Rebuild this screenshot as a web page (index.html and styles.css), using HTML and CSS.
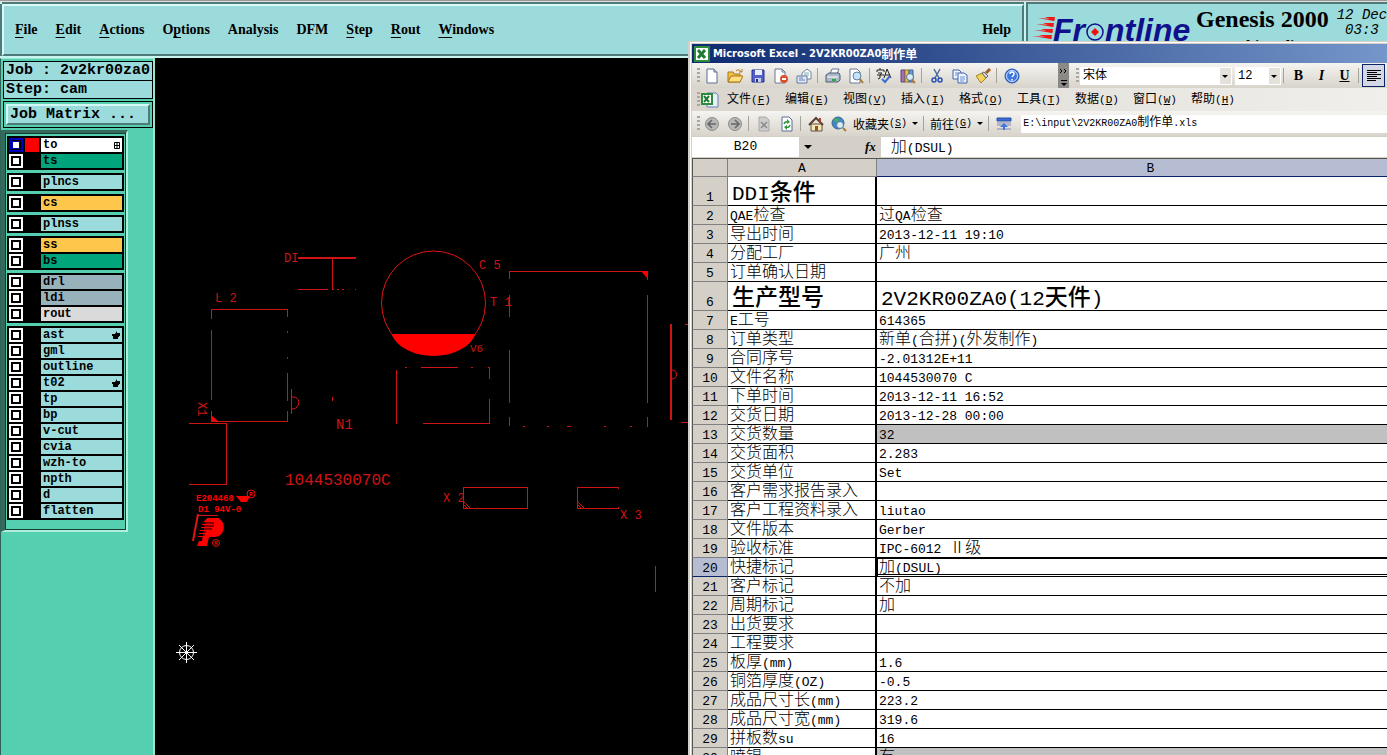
FILE: index.html
```html
<!DOCTYPE html>
<html lang="zh-CN">
<head>
<meta charset="utf-8">
<title>Genesis 2000</title>
<link rel="stylesheet" href="styles.css">
</head>
<body>
<div class="desktop">
  <header class="topbar">
    <nav class="menubar">
      <button><u>F</u>ile</button><button><u>E</u>dit</button><button><u>A</u>ctions</button><button>O<u>p</u>tions</button><button>Analysis</button><button>DFM</button><button><u>S</u>tep</button><button><u>R</u>out</button><button><u>W</u>indows</button><button class="help">Help</button>
    </nav>
    <div class="brand">
      <svg class="logo" width="162" height="38" viewBox="1032 12 162 38">
        <g fill="#f01818"><path d="M1038 18l17 1-1 2zM1036 24l18 1-1 2zM1034 30l19 1-1 2zM1032 36l20 1-1 2z"/><path d="M1045 17h10l-1 4zM1043 23h11l-1 4zM1041 29h12l-1 4zM1039 35h13l-1 4z"/></g>
        <g class="logo-text"><text x="1053" y="41">Fr</text><text x="1105" y="41">ntline</text></g>
        <circle cx="1095" cy="32" r="8" fill="none" stroke="#10108c" stroke-width="1.5"/>
        <path d="M1095 28l4 4-4 4-4-4z" fill="#f01010"/>
      </svg>
      <div class="product"><strong>Genesis 2000</strong><span>Graphic Editor</span></div>
      <div class="clock">12 Dec<br>&nbsp;03:3</div>
    </div>
  </header>
  <div class="work">
    <aside class="side">
      <div class="jobinfo"><div>Job : 2v2kr00za0</div><div>Step: cam</div></div>
      <div class="matrix"><button>Job Matrix ...</button></div>
      <div class="well"><div class="layers">
        <div class="group">
          <label class="layer on"><input type="checkbox" checked><i class="red"></i><span class="white">to<svg width="6" height="7" viewBox="0 0 6 7"><path d="M.5.5h5v6h-5zM0 3.500h6M3 0v7" fill="none" stroke="#000"/></svg></span></label>
          <label class="layer"><input type="checkbox"><i></i><span class="green">ts</span></label>
        </div>
        <div class="group"><label class="layer"><input type="checkbox"><i></i><span>plncs</span></label></div>
        <div class="group"><label class="layer"><input type="checkbox"><i></i><span class="amber">cs</span></label></div>
        <div class="group"><label class="layer"><input type="checkbox"><i></i><span>plnss</span></label></div>
        <div class="group">
          <label class="layer"><input type="checkbox"><i></i><span class="amber">ss</span></label>
          <label class="layer"><input type="checkbox"><i></i><span class="green">bs</span></label>
        </div>
        <div class="group">
          <label class="layer"><input type="checkbox"><i></i><span class="steel">drl</span></label>
          <label class="layer"><input type="checkbox"><i></i><span class="steel">ldi</span></label>
          <label class="layer"><input type="checkbox"><i></i><span class="pale">rout</span></label>
        </div>
        <div class="group">
          <label class="layer"><input type="checkbox"><i></i><span>ast<svg width="8" height="8"><path d="M0 3h3L5 0v2h3v3H7v1H6v2H1V5H0z"/></svg></span></label>
          <label class="layer"><input type="checkbox"><i></i><span>gml</span></label>
          <label class="layer"><input type="checkbox"><i></i><span>outline</span></label>
          <label class="layer"><input type="checkbox"><i></i><span>t02<svg width="8" height="8"><path d="M0 3h3L5 0v2h3v3H7v1H6v2H1V5H0z"/></svg></span></label>
          <label class="layer"><input type="checkbox"><i></i><span>tp</span></label>
          <label class="layer"><input type="checkbox"><i></i><span>bp</span></label>
          <label class="layer"><input type="checkbox"><i></i><span>v-cut</span></label>
          <label class="layer"><input type="checkbox"><i></i><span>cvia</span></label>
          <label class="layer"><input type="checkbox"><i></i><span>wzh-to</span></label>
          <label class="layer"><input type="checkbox"><i></i><span>npth</span></label>
          <label class="layer"><input type="checkbox"><i></i><span>d</span></label>
          <label class="layer"><input type="checkbox"><i></i><span>flatten</span></label>
        </div>
      </div></div>
    </aside>
    <main class="board">
      <svg width="533" height="697" viewBox="155 58 533 697">
        <g fill="none" stroke="#d01414" shape-rendering="crispEdges">
          <path d="M211.500 319v-9.500h76v7M211.500 330v70M211.500 411v10.500h76V411M287.500 331v2M287.500 357v2M287.500 373v28M291.500 389v25M189 423.500h37.500v61H189"/>
          <path d="M298 258h58" stroke-width="2"/>
          <path d="M332.500 259v30M298 289.500h30M332 289.500h2M337 289.500h2M342 289.500h2M355 289.500h1M332.500 397v4"/>
          <path d="M396.500 370v54M405 367.500h2M421 367.500h37M471 367.500h2M488 367.500h2M489.500 368v11M489.500 399v24.500H423"/>
          <path d="M509.500 279v-7.500h138v8M509.500 295v22M509.500 350v53M509.500 417v9M647.500 295v108M647.500 417v10M523 426.500h2M547 426.500h2M567 426.500h4M604 426.500h2M630 426.500h2"/>
          <path d="M671 324v96" stroke-width="2"/>
          <path d="M685 324.500h3M681 422.500h7M655.500 566v26M463.500 487.500h64v21h-64zM618 489v-1.500h-40.500v21H618v-2M463 501l8 8M463 504l5 5M577 501l8 8M577 504l4 4"/>
          <path d="M197 515.500h21"/>
        </g>
        <g fill="none" stroke="#e01414">
          <circle cx="433.500" cy="303" r="52"/>
          <path d="M292 397c9-1 9 12 0 12M672 370c6 0 6 9 0 9"/>
          <circle cx="251" cy="494" r="4"/><circle cx="216" cy="543" r="3.500"/>
          <path d="M198 514l-5 27" stroke-width="2"/>
        </g>
        <g fill="#f00">
          <path d="M391.500 334h84C464 363 403 363 391.500 334z"/>
          <path d="M641 271h7v8zM211 415l7 6h-7z"/>
          <path d="M236 496h14l-3 6h-6z"/>
          <path d="M208 518h7c12 0 12 19-1 19h-5l-2 9h-10l2-5h3l3-21z"/>
          <path d="M207 518h12v1h-12zM204 521h10v1h-10zM202 524h10v1h-10zM201 527h10v1h-10zM200 530h8v1h-8zM199 533h8v1h-8zM198 536h8v1h-8z"/>
        </g>
        <path d="M202 523h12M201 526h13M200 529h12M200 532h6M199 535h6" stroke="#000" fill="none"/>
        <g class="silk">
          <text x="284" y="262">DI</text><text x="215" y="302">L 2</text><text x="479" y="269">C 5</text><text x="490" y="306">T 1</text>
          <text x="470" y="352" class="small">V6</text><text x="336" y="429" class="wide">N1</text><text x="443" y="502">X 2</text><text x="620" y="519">X 3</text>
          <text transform="translate(198 402) rotate(90)">X1</text>
          <text x="285" y="485" class="number">1044530070C</text>
        </g>
        <g class="mark"><text x="196" y="501">E204460</text><text x="198" y="512">D1 94V-0</text><text x="214" y="545" class="reg">R</text><text x="249" y="496" class="reg">R</text></g>
        <g stroke="#fff" fill="none"><circle cx="186.500" cy="652.500" r="7"/><path d="M176 652.500h21M186.500 642v21M179 645l15 15M194 645l-15 15"/></g>
      </svg>
    </main>
  </div>

  <section class="excel">
    <div class="title"><svg width="16" height="16"><path d="M1 1h14v14H1z" fill="#fff" stroke="#2e8b3d" stroke-width="2"/><path d="M4 4l7 8M11 4l-7 8" stroke="#1f7a34" stroke-width="3"/></svg>Microsoft Excel - 2V2KR00ZA0<span>制作单</span></div>
    <div class="tools">
      <b class="grip"></b>
      <button aria-label="New"><svg width="16" height="16"><path d="M3 1h7l3 3v11H3z" fill="#fff" stroke="#5b6c94"/><path d="M10 1v3h3" fill="#c6d3ec" stroke="#5b6c94"/></svg></button>
      <button aria-label="Open"><svg width="16" height="16"><path d="M1 4h5l1 2h6v8H1z" fill="#f3c04a" stroke="#a87416"/><path d="M4 8h12l-3 6H1z" fill="#ffdf80" stroke="#a87416"/><path d="M9 3q3-3 5 1M15 1v3h-3" stroke="#b87820" fill="none"/></svg></button>
      <button aria-label="Save"><svg width="16" height="16"><path d="M2 2h12v12H2z" fill="#5560c8" stroke="#28308c"/><path d="M5 2h7v5H5z" fill="#e8ecfa"/><path d="M5 10h6v4H5z" fill="#c8cff0"/><path d="M6 11h2v3H6z" fill="#28308c"/></svg></button>
      <button aria-label="Permission"><svg width="16" height="16"><path d="M2 1h7l3 3v11H2z" fill="#fff" stroke="#6a7694"/><path d="M9 1v3h3" fill="none" stroke="#6a7694"/><circle cx="11" cy="11" r="4" fill="#d9502c"/><path d="M9 11h4" stroke="#fff" stroke-width="2"/></svg></button>
      <button aria-label="Mail"><svg width="16" height="16"><path d="M6 5l5-4 4 3v7H6z" fill="#fff" stroke="#7282a4"/><path d="M8 5h5M8 7h5" stroke="#8aa"/><path d="M1 8h10v7H1z" fill="#e4ebf8" stroke="#6078a8"/><path d="M3 10h4M3 12h6" stroke="#6078a8"/></svg></button>
      <b class="sep"></b>
      <button aria-label="Print"><svg width="16" height="16"><path d="M5 6l2-5h7l-2 5z" fill="#fff" stroke="#667799"/><path d="M1 7l3-2h10l1 2v5l-2 2H1z" fill="#aab8c8" stroke="#4c5c74"/><path d="M2 9h11" stroke="#fff"/><path d="M7 11h4v2H7z" fill="#28a838"/></svg></button>
      <button aria-label="Preview"><svg width="16" height="16"><path d="M2 1h7l3 3v11H2z" fill="#fff" stroke="#6a7694"/><circle cx="9" cy="8" r="4" fill="#c5e2f6" stroke="#5a80a8"/><path d="M12 11l3 4" stroke="#b07830" stroke-width="2"/></svg></button>
      <b class="sep"></b>
      <button aria-label="Spelling"><svg width="18" height="16"><path d="M4 0v2M1 4V2h7v2M2 5h4L4 7v3l-2 1M1 7h7M8 10l3-9 4 9M9 7h5" fill="none" stroke="#222"/><path d="M6 11l3 3 5-6" fill="none" stroke="#3b6fd4" stroke-width="2"/></svg></button>
      <button aria-label="Research"><svg width="16" height="16"><path d="M1 2h4v12H1z" fill="#a86cb4" stroke="#654080"/><path d="M5 2h4v12H5z" fill="#e8c850" stroke="#8c7420"/><path d="M9 2h4v12H9z" fill="#6c9cd8" stroke="#3c609c"/><circle cx="10" cy="9" r="3.500" fill="#d8ecf8" stroke="#507098"/><path d="M12 12l3 3" stroke="#b07830" stroke-width="2"/></svg></button>
      <b class="sep"></b>
      <button aria-label="Cut"><svg width="16" height="16"><path d="M5 1l5 9M11 1l-5 9" stroke="#4c6a9c" stroke-width="1.500"/><circle cx="5" cy="12" r="2" fill="none" stroke="#2850b4" stroke-width="1.500"/><circle cx="11" cy="12" r="2" fill="none" stroke="#2850b4" stroke-width="1.500"/></svg></button>
      <button aria-label="Copy"><svg width="16" height="16"><path d="M1 2h6l2 2v7H1z" fill="#eef4ff" stroke="#3c64ac"/><path d="M6 5h6l3 2v8H6z" fill="#eef4ff" stroke="#3c64ac"/><path d="M3 5h3M3 7h2M8 9h5M8 11h5M8 13h4" stroke="#6c94d0"/></svg></button>
      <button aria-label="Format painter"><svg width="16" height="16"><path d="M1 8l6-3 4 5-5 5z" fill="#f2d45c" stroke="#a88424"/><path d="M7 5l2-1 4 4-2 2z" fill="#d8dce4" stroke="#666"/><path d="M11 5l4-4" stroke="#a45c24" stroke-width="3"/></svg></button>
      <b class="sep"></b>
      <button aria-label="Help"><svg width="16" height="16"><circle cx="8" cy="8" r="7" fill="#3f78dc" stroke="#2858b0"/><circle cx="8" cy="8" r="5.500" fill="none" stroke="#cfe0ff"/><path d="M6 6q0-2 2-2t2 2q0 1-2 3M8 11v1.500" fill="none" stroke="#fff" stroke-width="1.500"/></svg></button>
      <button class="more" aria-label="More buttons"><svg width="10" height="24"><path d="M1 5l2 2-2 2M5 5l2 2-2 2" fill="none" stroke="#000"/><path d="M2 16h6v1H2zM2 19h6l-3 3z"/></svg></button>
      <b class="grip"></b>
      <span class="combo font"><select aria-label="Font"><option>宋体</option></select></span>
      <span class="combo size"><select aria-label="Font size"><option>12</option></select></span>
      <b class="sep"></b>
      <button class="fmt"><b>B</b></button><button class="fmt"><em>I</em></button><button class="fmt"><u>U</u></button>
      <b class="sep"></b>
      <button class="align" aria-label="Align left"><svg width="16" height="14"><path d="M1 1.500h14M1 3.500h10M1 5.500h14M1 7.500h10M1 9.500h14M1 11.500h9" stroke="#000"/></svg></button>
    </div>
    <nav class="xmenu">
      <b class="grip"></b>
      <svg width="18" height="16"><path d="M6 1h9l2 2v12H6z" fill="#e8eefa" stroke="#6880b0"/><path d="M1 2h10v10H1z" fill="#fff" stroke="#2e8b3d" stroke-width="2"/><path d="M3 4l5 6M8 4l-5 6" stroke="#1f7a34" stroke-width="2"/></svg>
      <button><span>文件</span>(<u>F</u>)</button><button><span>编辑</span>(<u>E</u>)</button><button><span>视图</span>(<u>V</u>)</button><button><span>插入</span>(<u>I</u>)</button><button><span>格式</span>(<u>O</u>)</button><button><span>工具</span>(<u>T</u>)</button><button><span>数据</span>(<u>D</u>)</button><button><span>窗口</span>(<u>W</u>)</button><button><span>帮助</span>(<u>H</u>)</button>
    </nav>
    <div class="tools web">
      <b class="grip"></b>
      <button aria-label="Back"><svg width="16" height="16"><circle cx="8" cy="8" r="6.500" fill="#b8b8b8" stroke="#8c8c8c"/><path d="M12 8H4M8 4L4 8l4 4" fill="none" stroke="#666" stroke-width="1.500"/></svg></button>
      <button aria-label="Forward"><svg width="16" height="16"><circle cx="8" cy="8" r="6.500" fill="#b8b8b8" stroke="#8c8c8c"/><path d="M4 8h8M8 4l4 4-4 4" fill="none" stroke="#666" stroke-width="1.500"/></svg></button>
      <b class="sep"></b>
      <button aria-label="Stop"><svg width="16" height="16"><path d="M3 1h7l3 3v11H3z" fill="#ccc" stroke="#aaa"/><path d="M5 6l6 6M11 6l-6 6" stroke="#888" stroke-width="1.500"/></svg></button>
      <button aria-label="Refresh"><svg width="16" height="16"><path d="M3 1h7l3 3v11H3z" fill="#fff" stroke="#5b6c94"/><path d="M5 8q1-3 4-2M11 9q-1 3-4 2" fill="none" stroke="#2c9a38" stroke-width="1.500"/><path d="M8 3l3 3-3 2zM8 9l-3 2 3 3z" fill="#2c9a38"/></svg></button>
      <b class="sep"></b>
      <button aria-label="Home"><svg width="16" height="16"><path d="M3 8h11v7H3z" fill="#f6e6b4" stroke="#665040"/><path d="M1 9l7-7 7 7" fill="none" stroke="#5c4030" stroke-width="2"/><path d="M11 2h2v4h-2z" fill="#b04028"/><path d="M7 10h3v5H7z" fill="#865c30"/></svg></button>
      <button aria-label="Search the web"><svg width="16" height="16"><circle cx="7" cy="7" r="6" fill="#4088c8" stroke="#386890"/><path d="M3 3q4-2 5 1-2 3-4 2zM6 8l3 2-2 3z" fill="#4cae58"/><circle cx="9" cy="9" r="3.500" fill="#d8ecf8" stroke="#507098"/><path d="M12 12l3 3" stroke="#b07830" stroke-width="2"/></svg></button>
      <button class="word"><span>收藏夹</span>(<u>S</u>)<i class="tri"></i></button>
      <b class="sep"></b>
      <button class="word"><span>前往</span>(<u>G</u>)<i class="tri"></i></button>
      <b class="sep"></b>
      <button aria-label="Show only web toolbar"><svg width="16" height="16"><path d="M1 2h14v3H1z" fill="#3c6cd4" stroke="#2850a8"/><path d="M1 7h14M1 9h14M1 13h14" stroke="#88a"/><path d="M8 7l4 4H9v3H7v-3H4z" fill="#3c78e0"/></svg></button>
      <div class="address">E:\input\2V2KR00ZA0<span>制作单</span>.xls</div>
    </div>
    <div class="formula">
      <input class="namebox" value="B20" aria-label="Name box"><i class="tri"></i><em>fx</em><div class="value"><span class="z">加</span>(DSUL)</div>
    </div>
    <table class="sheet">
      <colgroup><col class="c0"><col class="c1"><col></colgroup>
      <thead><tr><th></th><th>A</th><th class="hot">B</th></tr></thead>
      <tbody>
      <tr class="big"><th>1</th><td>DDI<span class="z">条件</span></td><td></td></tr>
      <tr><th>2</th><td>QAE<span class="z">检查</span></td><td><span class="z">过</span>QA<span class="z">检查</span></td></tr>
      <tr><th>3</th><td><span class="z">导出时间</span></td><td>2013-12-11 19:10</td></tr>
      <tr><th>4</th><td><span class="z">分配工厂</span></td><td><span class="z">广州</span></td></tr>
      <tr><th>5</th><td><span class="z">订单确认日期</span></td><td></td></tr>
      <tr class="big"><th>6</th><td><span class="z">生产型号</span></td><td>2V2KR00ZA0(12<span class="z">天件</span>)</td></tr>
      <tr><th>7</th><td>E<span class="z">工号</span></td><td>614365</td></tr>
      <tr><th>8</th><td><span class="z">订单类型</span></td><td><span class="z">新单</span>(<span class="z">合拼</span>)(<span class="z">外发制作</span>)</td></tr>
      <tr><th>9</th><td><span class="z">合同序号</span></td><td>-2.01312E+11</td></tr>
      <tr><th>10</th><td><span class="z">文件名称</span></td><td>1044530070 C</td></tr>
      <tr><th>11</th><td><span class="z">下单时间</span></td><td>2013-12-11 16:52</td></tr>
      <tr><th>12</th><td><span class="z">交货日期</span></td><td>2013-12-28 00:00</td></tr>
      <tr><th>13</th><td><span class="z">交货数量</span></td><td class="gray">32</td></tr>
      <tr><th>14</th><td><span class="z">交货面积</span></td><td>2.283</td></tr>
      <tr><th>15</th><td><span class="z">交货单位</span></td><td>Set</td></tr>
      <tr><th>16</th><td><span class="z">客户需求报告录入</span></td><td></td></tr>
      <tr><th>17</th><td><span class="z">客户工程资料录入</span></td><td>liutao</td></tr>
      <tr><th>18</th><td><span class="z">文件版本</span></td><td>Gerber</td></tr>
      <tr><th>19</th><td><span class="z">验收标准</span></td><td>IPC-6012 <span class="z">Ⅱ级</span></td></tr>
      <tr><th class="hot">20</th><td><span class="z">快捷标记</span></td><td class="sel"><span class="z">加</span>(DSUL)</td></tr>
      <tr><th>21</th><td><span class="z">客户标记</span></td><td><span class="z">不加</span></td></tr>
      <tr><th>22</th><td><span class="z">周期标记</span></td><td><span class="z">加</span></td></tr>
      <tr><th>23</th><td><span class="z">出货要求</span></td><td></td></tr>
      <tr><th>24</th><td><span class="z">工程要求</span></td><td></td></tr>
      <tr><th>25</th><td><span class="z">板厚</span>(mm)</td><td>1.6</td></tr>
      <tr><th>26</th><td><span class="z">铜箔厚度</span>(OZ)</td><td>-0.5</td></tr>
      <tr><th>27</th><td><span class="z">成品尺寸长</span>(mm)</td><td>223.2</td></tr>
      <tr><th>28</th><td><span class="z">成品尺寸宽</span>(mm)</td><td>319.6</td></tr>
      <tr><th>29</th><td><span class="z">拼板数</span>su</td><td>16</td></tr>
      <tr><th>30</th><td><span class="z">喷锡</span></td><td class="gray"><span class="z">有</span></td></tr>
      </tbody>
    </table>
  </section>
</div>
</body>
</html>
```
FILE: styles.css
```css
* { box-sizing: border-box; }
html, body { margin: 0; height: 100%; overflow: hidden; }
button { margin: 0; padding: 0; border: 0; background: none; font: inherit; color: inherit; white-space: nowrap; }
svg { display: block; flex: none; }
i { font-style: normal; }

.desktop { position: relative; height: 100%; display: flex; flex-direction: column; background: #000; overflow: hidden; border-top: 1px solid #999; }

/* Genesis header */
.topbar { flex: none; height: 57px; display: flex; background: #c8f4f0; border-top: 1px solid #ddd; padding-left: 1px; gap: 2px; }
.menubar { flex: 1; display: flex; align-items: center; gap: 18px; padding: 0 11px; background: #9bdbdb; border: 2px solid; border-color: #d8fafa #4e7a7a #4e7a7a #d8fafa; box-shadow: 0 -2px #4e7a7a, -2px 0 #4e7a7a; margin: 2px 0 2px 1px; font: bold 14px/18px "Liberation Serif", serif; }
.menubar u { text-underline-offset: 3px; }
.menubar .help { margin-left: auto; }
.brand { flex: none; width: 361px; display: flex; padding: 6px 0 0 4px; gap: 2px; background: #9bdbdb; border-left: 2px solid #4e7a7a; border-top: 2px solid #4e7a7a; overflow: hidden; }
.logo { margin-top: 2px; }
.logo-text { font: italic bold 32px "Liberation Sans", sans-serif; fill: #10108c; }
.product { display: flex; flex-direction: column; align-items: center; font: bold 16px/18px "Liberation Serif", serif; }
.product strong { font-size: 24px; line-height: 18px; padding-bottom: 10px; white-space: nowrap; }
.clock { font: italic 14px/15px "Liberation Mono", monospace; padding-left: 6px; white-space: nowrap; margin-top: -2px; }

/* Genesis sidebar */
.work { flex: 1; display: flex; min-height: 0; }
.side { flex: none; width: 155px; padding: 2px 0 0 2px; background: #54cfb0; border-left: 1px solid #2e6358; border-right: 2px solid #96e6d0; border-top: 1px solid #96e6d0; }
.jobinfo { width: 150px; border: 1px solid #000; background: #9bdbdb; font: bold 15px/18px "Liberation Mono", monospace; white-space: nowrap; }
.jobinfo div { padding-left: 2px; }
.jobinfo div + div { border-top: 1px solid #000; line-height: 17px; }
.matrix { width: 150px; margin-top: 2px; padding: 2px; border: 1px solid #000; }
.matrix button { width: 100%; height: 21px; padding-left: 2px; text-align: left; background: #9bdbdb; border: 2px solid; border-color: #d4f8f4 #4e7a7a #4e7a7a #d4f8f4; font: bold 15px/17px "Liberation Mono", monospace; }
.well { width: 127px; margin: 2px 0 0 -2px; border-top: 3px solid #35695c; border-left: 4px solid #35695c; border-right: 2px solid #b0eedc; border-bottom: 2px solid #b0eedc; }
.layers { display: flex; flex-direction: column; gap: 3px; padding: 2px 1px 9px; border: 1px solid #143c32; }
.group { padding: 2px 2px 0; background: #000; }
.layer { display: flex; height: 16px; padding-bottom: 2px; }
.layer input { appearance: none; flex: none; width: 14px; height: 14px; margin: 0; border: 2px solid #fff; background: #fff; box-shadow: inset 0 0 0 2px #000; }
.layer.on input { border-color: #0000b8; box-shadow: inset 0 0 0 1px #000, inset 0 0 0 2px #0000b8; }
.layer i { flex: none; width: 14px; margin: 0 2px; }
.layer span { flex: 1; display: flex; justify-content: space-between; align-items: center; padding: 0 2px; background: #9bdbdb; font: bold 12px/14px "Liberation Mono", monospace; }
.layer .red { background: #f00; }
.layer .white { background: #fff; }
.layer .green { background: #00a57c; }
.layer .amber { background: #ffc64c; }
.layer .steel { background: #98b2bc; }
.layer .pale { background: #dadada; }

/* Board canvas */
.board { flex: 1; background: #000; overflow: hidden; }
.silk { font: 12px "Liberation Mono", monospace; fill: #d01414; }
.silk .small { font-size: 11px; }
.silk .wide { font-size: 14px; }
.silk .number { font-size: 16px; }
.mark { font: bold 9px "Liberation Mono", monospace; fill: #f00; }
.mark .reg { font-size: 6px; }

/* Spreadsheet window over the board */
.excel { position: absolute; left: 688px; right: 0; top: 40px; bottom: 0; overflow: hidden; background: #d4d0c8; border: 1px solid #d4d0c8; border-width: 1px 0 0 2px; box-shadow: inset 1px 1px #fff; padding: 2px 0 0 2px; font: 10px/14px "Liberation Mono", monospace; }
.excel span { font-family: "Noto Sans CJK SC", sans-serif; font-size: 12px; line-height: 0; }
.title { height: 19px; display: flex; align-items: center; gap: 3px; padding-left: 2px; color: #fff; background: linear-gradient(90deg, #0e2a70, #7496ca); font: bold 11px/18px "DejaVu Sans Condensed", "Noto Sans", sans-serif; white-space: nowrap; }
.title span { margin-left: -3px; }
.tools, .xmenu { display: flex; align-items: center; height: 25px; padding-left: 5px; background: linear-gradient(#f5f4f1, #d8d4cb); white-space: nowrap; }
.tools > button { width: 23px; height: 23px; flex: none; display: flex; align-items: center; justify-content: center; }
.grip { flex: none; width: 3px; height: 16px; background: repeating-linear-gradient(#aaa6a0 0 2px, transparent 2px 4px); }
.sep { flex: none; width: 1px; height: 15px; margin: 0 3px 0 2px; background: #a5a29b; }
.tools > .more { width: 11px; height: 25px; margin: 0 7px 0 35px; background: #8c8a86; }
.combo { flex: none; display: flex; align-items: center; position: relative; background: #fff; height: 18px; }
.combo select { appearance: none; width: 100%; height: 18px; border: 0; padding: 0 3px; background: linear-gradient(#e4e1da, #e4e1da) right 1px center / 11px 16px no-repeat; font: 12px/18px "Liberation Mono", "Noto Sans CJK SC", monospace; color: #000; }
.combo::after { content: ""; position: absolute; right: 4px; top: 8px; border: 3px solid transparent; border-top-color: #000; border-bottom: 0; }
.font { width: 152px; margin: 0 3px 0 1px; }
.size { width: 46px; }
.tools > .fmt { font: bold 14px/16px "Liberation Serif", serif; }
.tools > .align { border: 1px solid #0a246a; background: #d4d8e4; }
.xmenu { height: 23px; padding-top: 1px; background: linear-gradient(90deg, #dad6ce, #f0efec); gap: 14px; font-size: 11px; }
.xmenu .grip { margin-right: -13px; }
.xmenu svg { margin-right: -6px; }
.xmenu button { width: 44px; text-align: left; }
.tools > .word { width: auto; padding: 0 3px; }
.tri { flex: none; border: 3px solid transparent; border-top-color: #000; border-bottom: 0; margin-left: 5px; }
.address { flex: 1; height: 18px; margin-left: 6px; padding-left: 2px; background: #fff; line-height: 17px; }
.formula { display: flex; align-items: center; height: 22px; padding: 1px 0; font-size: 13px; line-height: 20px; }
.namebox { width: 107px; height: 20px; border: 0; padding: 0; text-align: center; background: #fff; font: 13px/20px "Liberation Mono", monospace; }
.formula .tri { border-width: 4px 4px 0; }
.formula em { margin: 0 5px 0 53px; font: italic bold 13px/18px "Liberation Serif", serif; }
.formula .value { flex: 1; height: 20px; padding: 2px 0 0 10px; background: #fff; }
.excel .z { font-size: 16px; font-weight: 300; }

/* The last column runs on past the window's right edge */
.sheet { width: calc(100% + 38px); table-layout: fixed; border-collapse: separate; border-spacing: 0; border-top: 1px solid #55554f; font-size: 13px; line-height: 14px; }
.c0 { width: 36px; }
.c1 { width: 149px; }
.sheet th { padding: 4px 0 0; text-align: center; vertical-align: bottom; font-weight: normal; background: #d4d0c8; border-right: 1px solid #808080; border-bottom: 1px solid #808080; }
.sheet th:first-child { border-left: 1px solid #55554f; }
.sheet thead th { height: 18px; padding-top: 3px; }
.sheet .hot { background: #b6bdd2; border-bottom-color: #0a246a; }
.sheet td { padding: 4px 1px 0 2px; background: #fff; border-bottom: 1px solid #000; white-space: nowrap; }
.sheet td:nth-child(2) { border-right: 2px solid #000; }
.sheet .big td { padding: 8px 4px 0; font-size: 21px; line-height: 20px; }
.sheet .big .z { font-size: 23px; font-weight: 500; }
.sheet .gray { background: #c0c0c0; }
.sheet .sel { box-shadow: inset 1px 1px #000, inset 0 -1px #fff, inset 0 -2px #000; }
```
